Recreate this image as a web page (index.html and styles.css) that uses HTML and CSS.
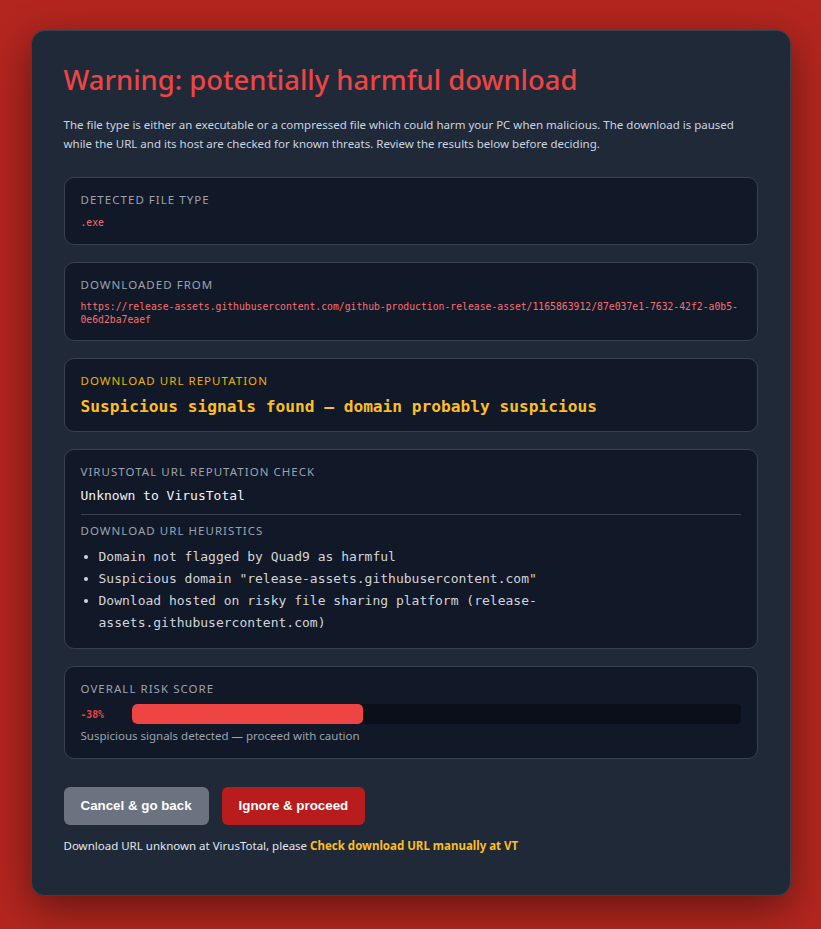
FILE: index.html
```html
<!DOCTYPE html>
<html lang="en">
<head>
  <meta charset="UTF-8" />
  <meta name="viewport" content="width=device-width, initial-scale=1.0"/>
  <title>Warning | Download paused</title>
  <link rel="stylesheet" href="styles.css">
</head>
<body>
  <main class="dialog">
    <h1 class="title">Warning: potentially harmful download</h1>
    <p class="intro">The file type is either an executable or a compressed file which could harm your PC when malicious. The download is paused while the URL and its host are checked for known threats. Review the results below before deciding.</p>

    <section class="panel">
      <div class="label">Detected file type</div>
      <div class="mono-small danger ext">.exe</div>
    </section>

    <section class="panel">
      <div class="label">Downloaded from</div>
      <div class="mono-small danger url">https://release-assets.githubusercontent.com/github-production-release-asset/1165863912/87e037e1-7632-42f2-a0b5-0e6d2ba7eaef</div>
    </section>

    <section class="panel">
      <div class="label warn">Download URL reputation</div>
      <div class="verdict">Suspicious signals found — domain probably suspicious</div>
    </section>

    <section class="panel">
      <div class="label">VirusTotal URL reputation check</div>
      <div class="vt-result">Unknown to VirusTotal</div>
      <hr class="divider">
      <div class="label">Download URL heuristics</div>
      <ul class="heuristics">
        <li>Domain not flagged by Quad9 as harmful</li>
        <li>Suspicious domain "release-assets.githubusercontent.com"</li>
        <li>Download hosted on risky file sharing platform (release-assets.githubusercontent.com)</li>
      </ul>
    </section>

    <section class="panel">
      <div class="label">Overall risk score</div>
      <div class="risk-row">
        <span class="risk-value">-38%</span>
        <div class="risk-track">
          <div class="risk-fill" style="width: 38%"></div>
        </div>
      </div>
      <div class="risk-caption">Suspicious signals detected — proceed with caution</div>
    </section>

    <div class="actions">
      <button class="btn btn-cancel">Cancel &amp; go back</button>
      <button class="btn btn-proceed">Ignore &amp; proceed</button>
    </div>

    <p class="note">Download URL unknown at VirusTotal, please <a href="#" class="vt-link">Check download URL manually at VT</a></p>
  </main>
</body>
</html>
```

FILE: styles.css
```css
body {
  margin: 0;
  padding: 30px 0 34px;
  min-height: 100vh;
  box-sizing: border-box;
  background-color: #b3261f;
  font-family: "Noto Sans", "Open Sans", sans-serif;
  color: #d1d5db;
}

.dialog {
  width: 760px;
  margin: 0 auto;
  box-sizing: border-box;
  padding: 32px 32px 32px;
  background-color: #1f2937;
  border: 1px solid #374151;
  border-radius: 14px;
  box-shadow: 0 12px 40px rgba(0, 0, 0, 0.45);
}

.title {
  margin: 0;
  font-size: 27.4px;
  line-height: 34px;
  font-weight: 500;
  color: #ef4444;
}

.intro {
  margin: 18px 0 24px;
  font-size: 11.5px;
  line-height: 19px;
  color: #cbd5e1;
}

.panel {
  background-color: #111827;
  border: 1px solid #374151;
  border-radius: 10px;
  padding: 14px 16px;
  margin-bottom: 17px;
}

.label {
  font-size: 11.5px;
  line-height: 16px;
  letter-spacing: 0.09em;
  text-transform: uppercase;
  color: #9ca3af;
  margin-bottom: 7px;
}

.label.warn {
  color: #eab308;
}

.mono-small {
  font-family: "DejaVu Sans Mono", monospace;
  font-size: 9.75px;
  line-height: 13px;
}

.ext {
  line-height: 15px;
}

.danger {
  color: #f87171;
}

.url {
  word-break: break-all;
}

.verdict {
  font-family: "DejaVu Sans Mono", monospace;
  font-size: 16.2px;
  line-height: 21px;
  font-weight: bold;
  color: #fbbf24;
}

.vt-result {
  font-family: "DejaVu Sans Mono", monospace;
  font-size: 13px;
  line-height: 18px;
  color: #f3f4f6;
}

.divider {
  border: none;
  border-top: 1px solid #374151;
  margin: 9px 0 8px;
}

.heuristics {
  margin: 0;
  padding-left: 18px;
  font-family: "DejaVu Sans Mono", monospace;
  font-size: 13px;
  line-height: 22px;
  color: #d1d5db;
}

.risk-row {
  display: flex;
  align-items: center;
  gap: 28px;
}

.risk-value {
  width: 23px;
  font-family: "DejaVu Sans Mono", monospace;
  font-size: 9.75px;
  font-weight: bold;
  color: #ef4444;
}

.risk-track {
  flex: 1;
  height: 20px;
  background-color: #0b0f17;
  border-radius: 5px;
  overflow: hidden;
}

.risk-fill {
  height: 100%;
  background-color: #ef4444;
  border-radius: 5px;
}

.risk-caption {
  margin-top: 4px;
  font-size: 11.5px;
  line-height: 16px;
  color: #9ca3af;
}

.actions {
  display: flex;
  gap: 13px;
  margin-top: 28px;
}

.btn {
  border: none;
  border-radius: 6px;
  padding: 11px 17px;
  font-family: "Liberation Sans", Arial, sans-serif;
  font-size: 13.333px;
  line-height: 16px;
  font-weight: bold;
  color: #ffffff;
  cursor: pointer;
}

.btn-cancel {
  background-color: #6b7280;
}

.btn-proceed {
  background-color: #b91c1c;
}

.note {
  margin: 11px 0 8px;
  font-size: 11.5px;
  line-height: 19px;
  color: #e5e7eb;
}

.vt-link {
  color: #fbbf24;
  font-weight: bold;
  text-decoration: none;
}
```
